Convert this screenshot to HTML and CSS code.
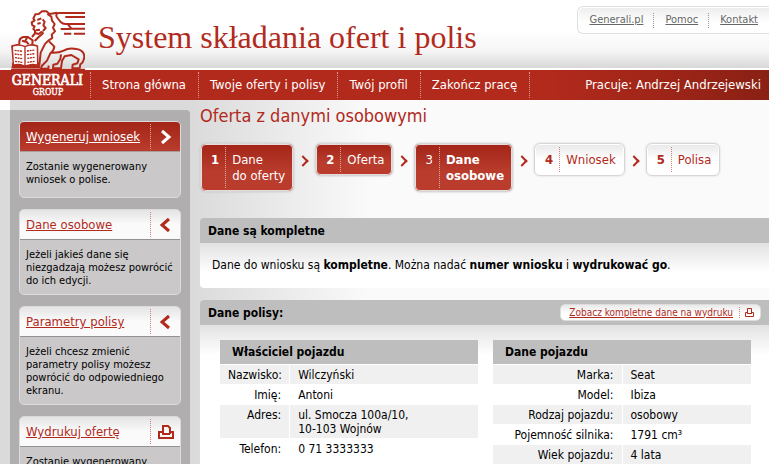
FILE: index.html
```html
<!DOCTYPE html>
<html lang="pl">
<head>
<meta charset="utf-8">
<title>Generali – System składania ofert i polis</title>
<link rel="stylesheet" href="styles.css">
</head>
<body>
<header class="top">
  <a class="logo" href="#" aria-label="Generali Group">
    <svg viewBox="0 0 255 297" width="85" height="99">
      <g fill="none" stroke="#b12a1c" stroke-width="6" stroke-linejoin="round" stroke-linecap="butt">
        <path d="M255 39H176q-10 2-6 12l12 15q6 6 14 6h59M196 51h59M182 87h24l8-1M204 73l10 13h41M192 101h22M222 101h33"/>
        <path d="M172 38L148 42 140 34 126 34 116 42 106 43 100 55 104 61 95 67 97 76 104 79 100 87 105 92 105 99 116 102 124 96 130 99"/>
        <path d="M112 60l12-5M112 71l10-2M128 58l6 8-4 10 7 8-8 9M108 91l12-2"/>
        <path d="M142 42l12 8 2 12 8 10-5 11 6 11-10 10 2 10-12 8-12 12"/>
        <path d="M130 99l-14 12-12 12M106 99l-10 12M58 132q-2-18 12-21l14 0 14 10-1 12M66 122l14 4 6 7M82 112l-6 10"/>
        <path d="M134 134l-12 24-4 38M147 124l16 16q-2 14-12 20l-10 22-16 16-2 8h22l1-9M151 158q24 2 40-6 16-10 38-5 20 2 24 20 0 18-12 26l-2 12h-22l1-11 14-4 4-12-22-13-20 4-8 14-3 22h-24l1-11 12-3 9-14 2-14"/>
      </g>
      <path fill="#b12a1c" stroke="#b12a1c" stroke-width="3" d="M36 204L39 184 35 137 54 133 75 139 96 133 113 137 114 186 120 204z"/>
      <path fill="#fff" d="M39 140q16-6 34 1v55q-16-7-31-3zM77 141q18-7 33-1l1 53q-16-5-34 3z"/>
      <path fill="none" stroke="#b12a1c" stroke-width="4" stroke-dasharray="6 2" d="M44 151l23 3M44 162l23 3M45 173l22 3M45 184l22 3M81 153l23-3M81 164l23-3M82 175l22-3M82 187l22-3"/>
      <path fill="#b12a1c" d="M33 206h222v91H33z"/>
      <text class="logo-name" x="142" y="254" text-anchor="middle">GENERALI</text>
      <text class="logo-group" x="144" y="286" text-anchor="middle">GROUP</text>
    </svg>
  </a>
  <h1 class="title">System składania ofert i polis</h1>
  <div class="links">
    <a href="#">Generali.pl</a><a href="#">Pomoc</a><a href="#">Kontakt</a>
  </div>
</header>
<nav class="nav">
  <a href="#">Strona główna</a><a href="#">Twoje oferty i polisy</a><a href="#">Twój profil</a><a href="#">Zakończ pracę</a>
  <span class="user">Pracuje: Andrzej Andrzejewski</span>
</nav>
<div class="page">
  <aside class="side">
    <section class="card active">
      <div class="card-head"><a href="#">Wygeneruj wniosek</a><span class="card-icon"><svg width="12" height="16" viewBox="0 0 12 16"><path d="M2 2l7 6-7 6"/></svg></span></div>
      <p>Zostanie wygenerowany wniosek o polise.</p>
    </section>
    <section class="card">
      <div class="card-head"><a href="#">Dane osobowe</a><span class="card-icon"><svg width="12" height="16" viewBox="0 0 12 16"><path d="M9 2L2 8l7 6"/></svg></span></div>
      <p>Jeżeli jakieś dane się niezgadzają możesz powrócić do ich edycji.</p>
    </section>
    <section class="card">
      <div class="card-head"><a href="#">Parametry polisy</a><span class="card-icon"><svg width="12" height="16" viewBox="0 0 12 16"><path d="M9 2L2 8l7 6"/></svg></span></div>
      <p>Jeżeli chcesz zmienić parametry polisy możesz powrócić do odpowiedniego ekranu.</p>
    </section>
    <section class="card">
      <div class="card-head"><a href="#">Wydrukuj ofertę</a><span class="card-icon"><svg class="print" width="16" height="14" viewBox="0 0 16 14"><path d="M5 9V1h5l2 2v6M4 7H1v6h14V7h-3M4 9h8"/></svg></span></div>
      <p>Zostanie wygenerowany wydruk oferty.</p>
    </section>
  </aside>
  <main class="main">
    <h2>Oferta z danymi osobowymi</h2>
    <ol class="steps">
      <li class="done"><b>1</b><span>Dane<br>do oferty</span></li>
      <li class="done"><b>2</b><span>Oferta</span></li>
      <li class="done current"><b>3</b><span>Dane<br>osobowe</span></li>
      <li><b>4</b><span>Wniosek</span></li>
      <li><b>5</b><span>Polisa</span></li>
    </ol>
    <section class="panel">
      <div class="panel-head"><h3>Dane są kompletne</h3></div>
      <p class="message">Dane do wniosku są <b>kompletne</b>. Można nadać <b>numer wniosku</b> i <b>wydrukować go</b>.</p>
    </section>
    <section class="panel">
      <div class="panel-head"><h3>Dane polisy:</h3>
        <a class="preview" href="#"><span>Zobacz kompletne dane na wydruku</span><i><svg width="9" height="9" viewBox="0 0 9 9"><path d="M2.500 6V.500h4V6M2 4.500H.500v4h8v-4H7M2 5.500h5"/></svg></i></a>
      </div>
      <div class="tables">
        <table>
          <colgroup><col class="owner-label"><col></colgroup>
          <thead><tr><th colspan="2" scope="colgroup">Właściciel pojazdu</th></tr></thead>
          <tbody>
            <tr><th scope="row">Nazwisko:</th><td>Wilczyński</td></tr>
            <tr><th scope="row">Imię:</th><td>Antoni</td></tr>
            <tr><th scope="row">Adres:</th><td>ul. Smocza 100a/10,<br>10-103 Wojnów</td></tr>
            <tr><th scope="row">Telefon:</th><td>0 71 3333333</td></tr>
          </tbody>
        </table>
        <table>
          <colgroup><col class="vehicle-label"><col></colgroup>
          <thead><tr><th colspan="2" scope="colgroup">Dane pojazdu</th></tr></thead>
          <tbody>
            <tr><th scope="row">Marka:</th><td>Seat</td></tr>
            <tr><th scope="row">Model:</th><td>Ibiza</td></tr>
            <tr><th scope="row">Rodzaj pojazdu:</th><td>osobowy</td></tr>
            <tr><th scope="row">Pojemność silnika:</th><td>1791 cm³</td></tr>
            <tr><th scope="row">Wiek pojazdu:</th><td>4 lata</td></tr>
          </tbody>
        </table>
      </div>
    </section>
  </main>
</div>
</body>
</html>
```
FILE: styles.css
```css
:root { --red: #b12a1c; }
* { box-sizing: border-box; }
html { scrollbar-width: none; }
body {
  margin: 0;
  font-family: Tahoma, "DejaVu Sans Condensed", "Noto Sans", sans-serif;
  font-size: 12px;
  line-height: 14px;
  color: #000;
  background: #fff;
}
h1, h2, h3, p, ol { margin: 0; padding: 0; }

.top {
  position: relative;
  display: flex;
  height: 70px;
  background: linear-gradient(#fff 45%, #f5f5f5 75%, #d8d8d8);
  border-bottom: 2px solid #fff;
}
.logo { width: 90px; height: 99px; z-index: 1; flex: none; }
.logo svg { display: block; }
.logo-name, .logo-group {
  font-family: "DejaVu Serif Condensed", "Liberation Serif", serif;
  fill: #fff;
  stroke: #fff;
}
.logo-name { font-size: 42px; stroke-width: 2; }
.logo-group { font-size: 26px; stroke-width: 1; }
.title {
  flex: 1;
  padding: 18px 0 0 8px;
  font: 32px/38px "Liberation Serif", serif;
  color: var(--red);
  white-space: nowrap;
}
.links {
  display: flex;
  align-items: center;
  height: 28px;
  margin-top: 6px;
  border: 1px solid #e0e0e0;
  border-right: 0;
  border-radius: 6px 0 0 6px;
  background: linear-gradient(#ececec, #fff 60%);
  box-shadow: inset 1px 1px 0 #fff;
  font-size: 11px;
}
.links a { margin: 0 11px; color: #666; }
.links a + a { position: relative; }
.links a + a::before {
  content: "";
  position: absolute;
  left: -12px;
  top: 0;
  height: 15px;
  border-left: 1px dotted #999;
}

.nav {
  display: flex;
  align-items: center;
  height: 30px;
  padding-left: 90px;
  background: linear-gradient(90deg, var(--red) 72%, #8a2014);
  font-size: 13px;
  color: #fff;
}
.nav a {
  padding: 0 12px 0 11px;
  border-left: 1px dotted #dc9a92;
  line-height: 26px;
  color: #fff;
  text-decoration: none;
  white-space: nowrap;
}
.nav a:nth-of-type(4) { border-right: 1px dotted #dc9a92; }
.user { margin-left: auto; padding-right: 8px; white-space: nowrap; }

.page {
  display: flex;
  align-items: flex-start;
  background: linear-gradient(90deg, #fff 10px, #dadada 10px, #dadada 190px, #fafafa 370px);
}
.side {
  width: 190px;
  flex: none;
  margin-top: 10px;
  padding: 11px 9px 11px 19px;
  border-radius: 0 4px 0 0;
  background: linear-gradient(90deg, #dadada 10px, #b0aeae 10px);
  display: flex;
  flex-direction: column;
  gap: 11px;
}
.card {
  min-height: 77px;
  border: 1px solid #dcdadb;
  border-radius: 5px;
  background: #cac8c9;
  overflow: hidden;
  font-size: 11px;
  line-height: 13px;
}
.card-head {
  display: flex;
  justify-content: space-between;
  align-items: center;
  height: 30px;
  padding-left: 6px;
  background: linear-gradient(#e4e4e4, #fafafa 50%);
  border-bottom: 1px solid #939191;
  font-size: 13px;
}
.card-head a { color: var(--red); white-space: nowrap; }
.card-icon {
  display: flex;
  align-items: center;
  justify-content: center;
  width: 30px;
  height: 25px;
  border-left: 1px dotted #d08078;
}
.card-icon path { fill: none; stroke: var(--red); stroke-width: 3; }
.card-icon .print path { stroke-width: 2; }
.active .card-head { background: linear-gradient(#a32518, #b93c2d); border-color: #a79f9f; }
.active .card-head a { color: #fff; }
.active .card-icon { border-color: #e0aaa4; }
.active .card-icon path { stroke: #fff; }
.card p { padding: 8px 6px 7px; }

.main { flex: 1; min-width: 0; padding-left: 10px; }
h2 {
  margin-top: 5px;
  font-size: 18px;
  line-height: 22px;
  font-weight: normal;
  color: var(--red);
}
.steps {
  display: flex;
  align-items: flex-start;
  height: 75px;
  margin-top: 16px;
  gap: 21px;
  list-style: none;
  font-size: 13px;
  line-height: 16px;
  color: var(--red);
}
.steps li {
  position: relative;
  display: flex;
  padding: 3px 8px 3px 0;
  border: 1px solid #d6d6d6;
  border-radius: 6px;
  background: linear-gradient(#e8e8e8, #fff 50%);
  box-shadow: inset 0 0 0 1px #fff, 0 0 2px #ccc;
}
.steps b { padding: 5px 6px 4px 10px; border-right: 1px dotted #d08078; }
.steps span { padding: 5px 0 4px 6px; white-space: nowrap; }
.steps .done {
  color: #fff;
  background: linear-gradient(#a32518, #b93c2d 60%);
  box-shadow: inset 0 0 0 1px #e6dcdc, 0 0 2px #bbb;
}
.steps .done b { border-color: #e0aaa4; }
.steps .current b { font-weight: normal; }
.steps .current span { font-weight: bold; }
.steps li + li::before {
  content: "";
  position: absolute;
  left: -17px;
  top: 13px;
  width: 6px;
  height: 6px;
  border: solid var(--red);
  border-width: 2px 2px 0 0;
  transform: rotate(45deg);
}

.panel {
  margin-bottom: 12px;
  border-radius: 4px 0 0 4px;
  background: linear-gradient(#e2e2e2 25px, #fff 55px);
  overflow: hidden;
}
.panel-head {
  display: flex;
  align-items: center;
  justify-content: space-between;
  height: 25px;
  padding: 0 8px;
  background: #bebebe;
}
h3 { font-size: 12px; line-height: 16px; }
.message { padding: 14px 12px 15px; line-height: 16px; }
.preview {
  display: flex;
  align-items: center;
  height: 17px;
  padding: 0 6px 0 8px;
  border: 1px solid #ddd;
  border-radius: 5px;
  background: linear-gradient(#eaeaea, #fff 60%);
  font-size: 10px;
  color: var(--red);
  text-decoration: none;
  white-space: nowrap;
}
.preview span { text-decoration: underline; }
.preview i {
  display: flex;
  align-items: center;
  height: 11px;
  margin-left: 6px;
  padding-left: 5px;
  border-left: 1px dotted #d08078;
}
.preview path { fill: none; stroke: var(--red); }

.tables {
  display: grid;
  grid-template-columns: 1fr 1fr;
  align-items: start;
  gap: 15px;
  padding: 15px 18px 15px 20px;
}
table { border-collapse: collapse; width: 100%; table-layout: fixed; }
thead th {
  height: 24px;
  padding: 0 12px;
  background: #bebebe;
  text-align: left;
}
tbody th, tbody td {
  padding: 3px 8px 2px;
  border-top: 1px solid #fff;
  font-weight: normal;
  text-align: left;
  vertical-align: top;
}
tbody th { text-align: right; white-space: nowrap; }
tbody td { border-left: 1px solid #fff; }
tbody tr:nth-child(odd) { background: #f0f0f0; }
.owner-label { width: 27%; }
.vehicle-label { width: 50%; }
```
